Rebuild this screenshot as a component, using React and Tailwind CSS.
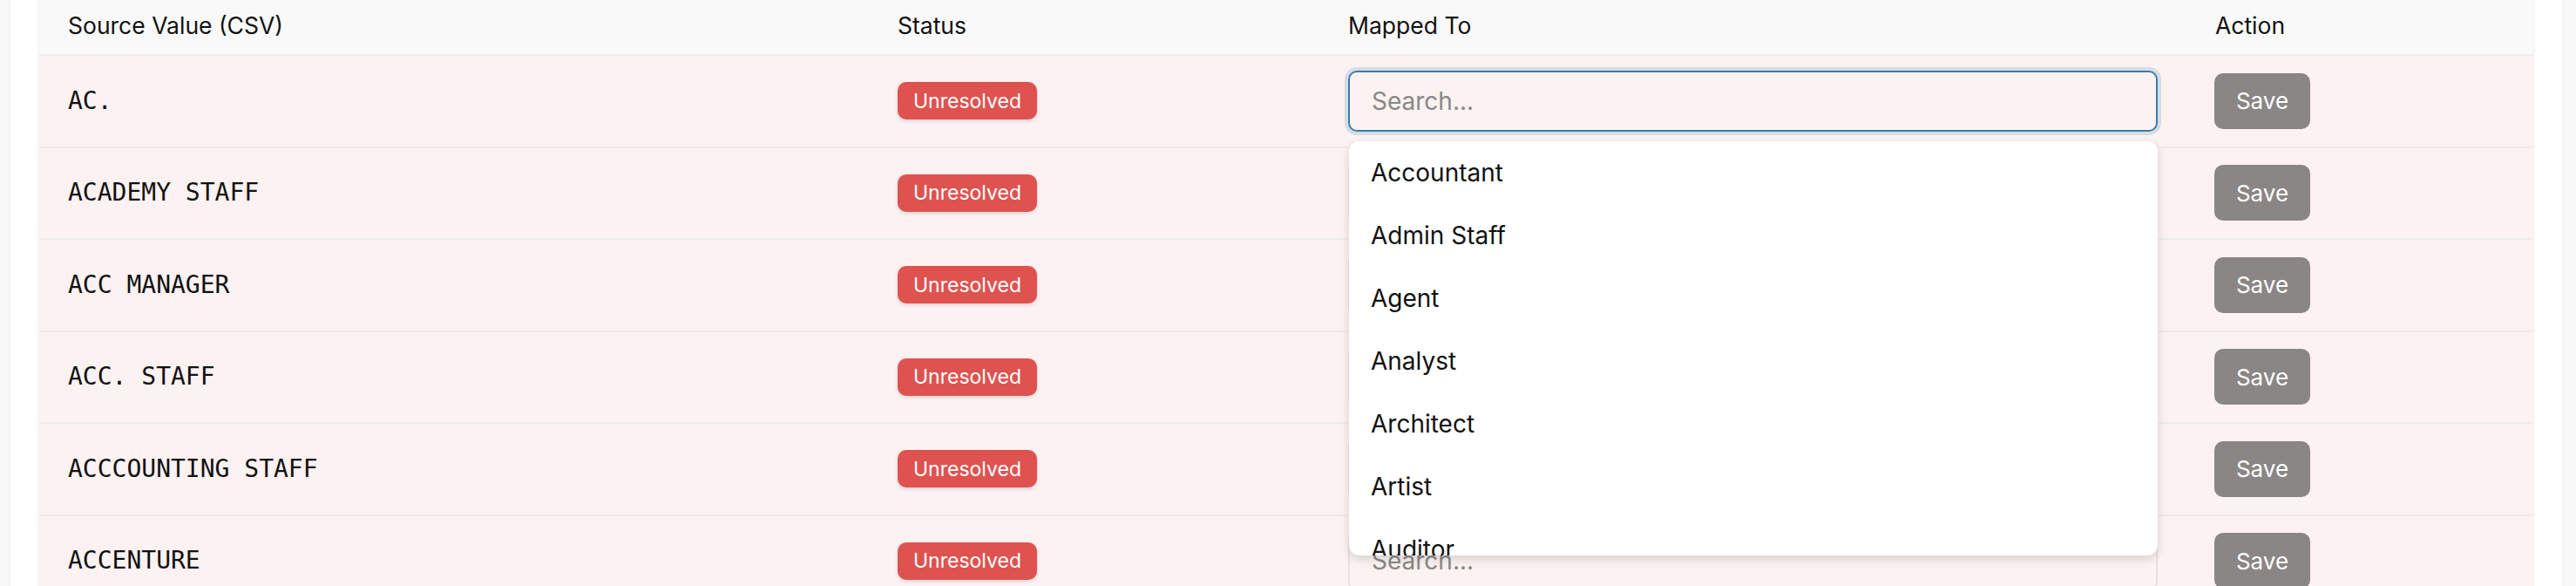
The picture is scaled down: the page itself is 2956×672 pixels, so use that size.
import React from 'react';

const rows = ['AC.', 'ACADEMY STAFF', 'ACC MANAGER', 'ACC. STAFF', 'ACCCOUNTING STAFF', 'ACCENTURE'];
const options = ['Accountant', 'Admin Staff', 'Agent', 'Analyst', 'Architect', 'Artist', 'Auditor', 'Banker'];

const cols = 'grid grid-cols-[952px_517px_995px_397px]';

const App = () => {
  return (
    <div className="min-h-[672px] bg-[#f8f8f8] pl-[12px] pr-[16px] font-['Inter',sans-serif]">
      <div className="bg-white px-[33px] min-h-[672px] shadow-[0_0_3px_rgba(0,0,0,0.08)]">
        <div className="shadow-[0_0_4px_rgba(0,0,0,0.1)]">
          {/* header */}
          <div className={`${cols} h-[64px] bg-[#f9f9f9] border-b-2 border-[#ececec] text-[26.5px] text-[#111] items-center`}>
            <div className="pl-[33px] pb-[2px]">Source Value (CSV)</div>
            <div className="pl-[33px] pb-[2px]">Status</div>
            <div className="pl-[33px] pb-[2px]">Mapped To</div>
            <div className="pl-[33px] pb-[2px]">Action</div>
          </div>

          {rows.map((value, i) => (
            <div key={i} className={`${cols} h-[105.5px] bg-[#fcf2f1] border-b-2 border-[#ececec] items-center`}>
              <div className="pl-[33px] font-['DejaVu_Sans_Mono',monospace] text-[28px] text-[#111]">{value}</div>
              <div className="pl-[33px]">
                <span className="inline-flex items-center h-[43px] px-[18px] rounded-[10px] bg-[#de5350] text-white text-[23px] shadow-[0_2px_4px_rgba(0,0,0,0.12)]">
                  Unresolved
                </span>
              </div>
              <div className="pl-[33px] pr-[33px] relative">
                <input
                  readOnly
                  placeholder="Search..."
                  className={`w-[929px] h-[70px] rounded-[10px] bg-transparent px-[25px] text-[28px] placeholder:text-[#888] outline-none ${
                    i === 0
                      ? 'border-2 border-[#3a7ca8] ring-4 ring-[#d5dde6]'
                      : 'border-2 border-[#e6e2e2]'
                  }`}
                />
                {i === 0 && (
                  <div className="absolute left-[34px] top-[81px] z-10 w-[928px] h-[475px] overflow-hidden rounded-[12px] bg-white shadow-[0_4px_12px_rgba(0,0,0,0.15)]">
                    {options.map((opt) => (
                      <div key={opt} className="h-[72px] flex items-center px-[25px] text-[28px] text-[#111]">
                        {opt}
                      </div>
                    ))}
                  </div>
                )}
              </div>
              <div className="pl-[32px]">
                <button className="h-[64px] w-[110px] rounded-[10px] bg-[#8a8685] text-white text-[26px]">Save</button>
              </div>
            </div>
          ))}
        </div>
      </div>
    </div>
  );
};

export default App;
